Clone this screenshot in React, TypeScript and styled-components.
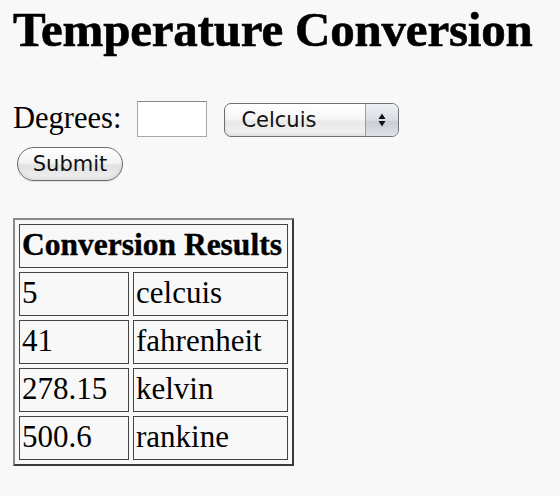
import React from 'react';
import styled, { createGlobalStyle } from 'styled-components';

const GlobalStyle = createGlobalStyle`
    html, body {
        margin: 0;
        padding: 0;
        background: #f8f8f8;
    }
    body {
        font-family: "Liberation Serif", "Times New Roman", serif;
        color: #000;
    }
`;

const Page = styled.div`
    width: 560px;
    height: 496px;
    padding: 2px 0 0 13px;
    box-sizing: border-box;
    overflow: hidden;
`;

const Title = styled.h1`
    margin: 0;
    font-size: 49px;
    line-height: 56px;
    font-weight: bold;
    letter-spacing: -0.2px;
    -webkit-text-stroke: 0.6px #000;
`;

const Form = styled.form`
    margin-top: 43px;
    display: flex;
    flex-direction: column;
    align-items: flex-start;
    gap: 10px;
`;

const Row = styled.div`
    display: flex;
    align-items: center;
    height: 36px;
`;

const Label = styled.label`
    font-size: 30.5px;
    line-height: 32px;
    margin: 0 16px 3px 0;
`;

const Input = styled.input`
    width: 70px;
    height: 36px;
    box-sizing: border-box;
    border: 1px solid #a8a8a8;
    border-top-color: #888;
    background: #fff;
    margin: 0 17px 0 0;
    padding: 0;
`;

const SelectWrap = styled.div`
    position: relative;
    width: 175px;
    height: 34px;
    margin-top: 2px;
`;

const Select = styled.select`
    appearance: none;
    width: 100%;
    height: 100%;
    box-sizing: border-box;
    border: 1px solid #6f6f6f;
    border-radius: 7px;
    padding: 0 40px 0 16px;
    font-family: "DejaVu Sans", Verdana, sans-serif;
    font-size: 21px;
    color: #111;
    background: linear-gradient(#ffffff 0%, #f7f7f7 45%, #e9e9e9 55%, #f3f3f3 100%);
    box-shadow: inset 0 -2px 3px rgba(0, 0, 0, 0.08);
    outline: none;
`;

const Arrows = styled.span`
    position: absolute;
    top: 1px;
    right: 1px;
    bottom: 1px;
    width: 32px;
    border-left: 1px solid #9a9ca2;
    border-radius: 0 6px 6px 0;
    background: linear-gradient(#eef0f4 0%, #d9dde4 50%, #c9ced7 55%, #dde1e7 100%);
    display: flex;
    align-items: center;
    justify-content: center;
    pointer-events: none;
`;

const Button = styled.button`
    width: 106px;
    height: 34px;
    margin-left: 4px;
    border: 1px solid #6e6e6e;
    border-radius: 17px;
    background: linear-gradient(#ffffff 0%, #f4f4f4 45%, #e2e2e2 55%, #f0f0f0 100%);
    box-shadow: inset 0 -2px 3px rgba(0, 0, 0, 0.08), 0 1px 1px rgba(0, 0, 0, 0.1);
    font-family: "DejaVu Sans", Verdana, sans-serif;
    font-size: 21px;
    color: #111;
    padding: 0;
    cursor: pointer;
`;

const Table = styled.table`
    margin-top: 37px;
    border-collapse: separate;
    border-spacing: 4px;
    border: 2px solid;
    border-color: #8a8a8a #3a3a3a #3a3a3a #8a8a8a;
`;

const Head = styled.th`
    font-size: 31.5px;
    line-height: 34px;
    font-weight: bold;
    text-align: left;
    padding: 3px 2px 5px;
    border: 1px solid #444;
    white-space: nowrap;
    -webkit-text-stroke: 0.4px #000;
`;

const Cell = styled.td<{ $w: number }>`
    box-sizing: border-box;
    width: ${(p) => p.$w}px;
    font-size: 31px;
    line-height: 34px;
    padding: 3px 2px 5px;
    border: 1px solid #444;
    white-space: nowrap;
`;

const results = [
    ['5', 'celcuis'],
    ['41', 'fahrenheit'],
    ['278.15', 'kelvin'],
    ['500.6', 'rankine'],
];

const App = () => {
    return (
        <>
            <GlobalStyle />
            <Page>
                <Title>Temperature Conversion</Title>
                <Form onSubmit={(e) => e.preventDefault()}>
                    <Row>
                        <Label htmlFor="degrees">Degrees:</Label>
                        <Input id="degrees" name="degrees" />
                        <SelectWrap>
                            <Select name="scale" defaultValue="celcuis">
                                <option value="celcuis">Celcuis</option>
                                <option value="fahrenheit">Fahrenheit</option>
                                <option value="kelvin">Kelvin</option>
                                <option value="rankine">Rankine</option>
                            </Select>
                            <Arrows>
                                <svg width="8" height="16" viewBox="0 0 8 16">
                                    <path d="M4 1.5 L7.5 7 L0.5 7 Z" fill="#111" />
                                    <path d="M4 14.5 L7.5 9 L0.5 9 Z" fill="#111" />
                                </svg>
                            </Arrows>
                        </SelectWrap>
                    </Row>
                    <Button type="submit">Submit</Button>
                </Form>
                <Table>
                    <tbody>
                        <tr>
                            <Head colSpan={2}>Conversion Results</Head>
                        </tr>
                        {results.map(([value, unit]) => (
                            <tr key={unit}>
                                <Cell $w={110}>{value}</Cell>
                                <Cell $w={155}>{unit}</Cell>
                            </tr>
                        ))}
                    </tbody>
                </Table>
            </Page>
        </>
    );
};

export default App;
